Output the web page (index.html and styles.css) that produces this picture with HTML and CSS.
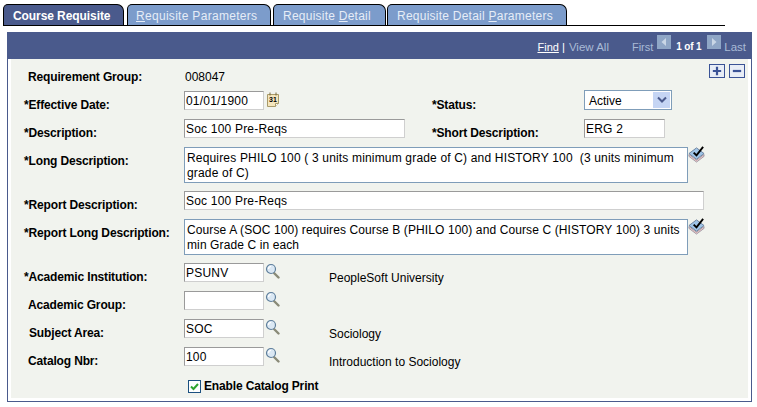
FILE: index.html
```html
<!DOCTYPE html>
<html lang="en">
<head>
<meta charset="utf-8">
<title>Course Requisite</title>
<link rel="stylesheet" href="styles.css">
</head>
<body>
<svg class="defs" width="0" height="0" aria-hidden="true">
  <defs>
    <symbol id="lens" viewBox="0 0 15 16">
      <path d="M9 10l4.500 4.500" stroke="#8a8a78" stroke-width="2.400" stroke-linecap="round" fill="none"/>
      <circle cx="6" cy="6" r="4.500" fill="#dbe8f4" stroke="#5f7f9c" stroke-width="1.200"/>
      <path d="M3.500 6a2.500 2.500 0 0 1 2.500-2.500" stroke="#fff" stroke-width="1.200" fill="none"/>
    </symbol>
    <symbol id="book" viewBox="0 0 18 18">
      <path d="M1 8l8-6 8 6-8 6z" fill="#9fc4e8" stroke="#6a7f9c" stroke-width="1"/>
      <path d="M1 9v2l8 6 8-6V9l-8 6z" fill="#f3c6c6" stroke="#8a8a9a" stroke-width=".8"/>
      <path d="M6 7l3 3 7-9" stroke="#000" stroke-width="2" fill="none"/>
    </symbol>
  </defs>
</svg>
<nav class="tabs">
  <a class="tab tab-active">Course Requisite</a>
  <a class="tab tab-2"><u>R</u>equisite Parameters</a>
  <a class="tab tab-3">Requisite <u>D</u>etail</a>
  <a class="tab tab-4">Requisite Detail <u>P</u>arameters</a>
</nav>
<main class="panel">
  <header class="bar">
    <a class="find">Find</a><span class="sep">|</span><span class="dim">View All</span>
    <span class="dim first">First</span>
    <svg class="nav-btn nav-prev" viewBox="0 0 14 14"><rect width="14" height="14" fill="#8fa6c6"/><path d="M9 3v8L4.500 7z" fill="#c9d6e6"/></svg>
    <b class="count">1 of 1</b>
    <svg class="nav-btn nav-next" viewBox="0 0 14 14"><rect width="14" height="14" fill="#8fa6c6"/><path d="M5 3v8l4.500-4z" fill="#c9d6e6"/></svg>
    <span class="dim last">Last</span>
  </header>
  <form class="form">
    <div class="add-remove">
      <span class="sq"><svg viewBox="0 0 15 13"><path d="M7.500 2v9M3 6.500h9" stroke="#3a5296" stroke-width="2.400"/></svg></span>
      <span class="sq"><svg viewBox="0 0 15 13"><path d="M3 6.500h9" stroke="#3a5296" stroke-width="2.400"/></svg></span>
    </div>
    <div class="row row-req">
      <label class="lbl ind">Requirement Group:</label>
      <span class="val">008047</span>
    </div>
    <div class="row">
      <label class="lbl">*Effective Date:</label>
      <input class="inp w80" value="01/01/1900">
      <svg class="cal" viewBox="0 0 12 15"><path d="M.5 2.500h11v9l-3 3h-8z" fill="#f5e6bd" stroke="#a89a6a"/><path d="M3 .5v3M9 .5v3" stroke="#7a6a3a"/><path d="M8.500 14.500v-3h3" fill="#fff" stroke="#a89a6a"/><text x="6" y="10" class="cal-text">31</text></svg>
      <label class="lbl lbl-right status">*Status:</label>
      <div class="select"><span>Active</span><span class="arrow"><svg viewBox="0 0 10 8"><path d="M1 1.500l4 4 4-4" fill="none" stroke="#4a5a8c" stroke-width="2"/></svg></span></div>
    </div>
    <div class="row">
      <label class="lbl">*Description:</label>
      <input class="inp w221" value="Soc 100 Pre-Reqs">
      <label class="lbl lbl-right short">*Short Description:</label>
      <input class="inp w81" value="ERG 2">
    </div>
    <div class="row row-tall">
      <label class="lbl">*Long Description:</label>
      <textarea class="area area-long" rows="2">Requires PHILO 100 ( 3 units minimum grade of C) and HISTORY 100  (3 units minimum grade of C)</textarea>
      <svg class="bookicon"><use href="#book"/></svg>
    </div>
    <div class="row">
      <label class="lbl">*Report Description:</label>
      <input class="inp w520" value="Soc 100 Pre-Reqs">
    </div>
    <div class="row row-tall">
      <label class="lbl">*Report Long Description:</label>
      <textarea class="area area-report" rows="2">Course A (SOC 100) requires Course B (PHILO 100) and Course C (HISTORY 100) 3 units min Grade C in each</textarea>
      <svg class="bookicon"><use href="#book"/></svg>
    </div>
    <div class="row">
      <label class="lbl">*Academic Institution:</label>
      <input class="inp w80" value="PSUNV">
      <svg class="lens"><use href="#lens"/></svg>
      <span class="desc">PeopleSoft University</span>
    </div>
    <div class="row">
      <label class="lbl ind">Academic Group:</label>
      <input class="inp w80" value="">
      <svg class="lens"><use href="#lens"/></svg>
    </div>
    <div class="row">
      <label class="lbl ind2">Subject Area:</label>
      <input class="inp w80" value="SOC">
      <svg class="lens"><use href="#lens"/></svg>
      <span class="desc">Sociology</span>
    </div>
    <div class="row">
      <label class="lbl ind">Catalog Nbr:</label>
      <input class="inp w80" value="100">
      <svg class="lens"><use href="#lens"/></svg>
      <span class="desc">Introduction to Sociology</span>
    </div>
    <div class="row row-check">
      <span class="check"><svg viewBox="0 0 11 11"><path d="M2 5.500l2.500 2.500L9 3" fill="none" stroke="#2fa52f" stroke-width="2"/></svg></span>
      <label class="check-lbl">Enable Catalog Print</label>
    </div>
  </form>
</main>
</body>
</html>
```
FILE: styles.css
```css
* { box-sizing: border-box; }
html, body { margin: 0; padding: 0; background: #fff; }
body { width: 757px; height: 407px; overflow: hidden; font: 12px/14px "Liberation Sans", Arial, sans-serif; color: #000; }
.defs { display: block; height: 0; }

.tabs { display: flex; align-items: flex-end; width: 722px; height: 26px; margin-left: 3px; padding-top: 4px; border-bottom: 1px solid #000; }
.tab { display: block; height: 21px; padding: 4px 0 0 9px; color: #e6edf7; background: #7c9ccb; border: 1px solid #000; border-bottom: 0; border-radius: 5px 7px 0 0; letter-spacing: .24px; }
.tab-active { width: 121px; margin-right: 3px; padding-left: 9px; font-weight: bold; color: #fff; background: #4a5a8c; letter-spacing: -.08px; }
.tab-2 { width: 144px; margin-right: 2px; padding-left: 8px; letter-spacing: .3px; }
.tab-3 { width: 113px; margin-right: 1px; padding-left: 9px; }
.tab-4 { width: 180px; padding-left: 9px; }

.panel { width: 745px; height: 370px; margin: 6px 0 0 7px; padding: 0 3px 3px; border: 1px solid #4a5a8c; border-top: 0; }
.bar { display: flex; align-items: flex-end; height: 27px; margin: 0 -3px; padding: 0 5px 5px 0; background: #4a5a8c; justify-content: flex-end; color: #a9bbd6; font-size: 11.500px; }
.find { color: #fff; font-size: 11px; text-decoration: underline; }
.sep { margin: 0 4px 0 3px; color: #fff; }
.first { margin-left: 23px; font-size: 11px; }
.nav-btn { width: 14px; height: 14px; margin-bottom: 5px; }
.nav-prev { margin-left: 4px; margin-right: 5px; }
.nav-next { margin-left: 6px; margin-right: 3px; }
.count { color: #fff; font-size: 10px; letter-spacing: -.2px; }
.last { font-size: 11.500px; }

.form { position: relative; display: flex; flex-direction: column; gap: 8px; height: 339px; padding: 9px 0 0 13px; background: #f1f3ee; }
.add-remove { position: absolute; top: 5px; right: 3px; display: flex; gap: 4px; }
.sq { display: block; width: 16px; height: 14px; background: #e8edf6; border: 1px solid #3a5296; }
.sq svg { display: block; width: 14px; height: 12px; }

.row { display: flex; align-items: flex-start; height: 20px; }
.row-req { height: 15px; }
.row-tall { height: 36px; }
.lbl { flex: none; width: 160px; padding-top: 7px; font-weight: bold; white-space: nowrap; letter-spacing: -.15px; }
.ind { padding-left: 4px; }
.ind2 { padding-left: 5px; }
.row-req .lbl { padding-top: 2px; }
.val { padding: 2px 0 0 1px; }
.lbl-right { width: auto; }
.status { margin-left: 153px; width: 152px; flex: none; padding-top: 7px; }
.short { margin-left: 27px; width: 152px; }

.inp { display: block; height: 19px; margin: 0; padding: 0 0 0 1px; font: inherit; letter-spacing: .2px; color: #000; background: #fff; border: 1px solid; border-color: #9a9a9a #cfcfcf #cfcfcf #9a9a9a; outline: 0; }
.w80 { width: 80px; }
.w81 { width: 81px; }
.w221 { width: 221px; }
.w520 { width: 520px; }
.cal { width: 12px; height: 15px; margin: 1px 0 0 3px; }
.cal-text { font: bold 7px "Liberation Sans", Arial, sans-serif; text-anchor: middle; fill: #000; }
.select { display: flex; align-items: center; justify-content: space-between; width: 88px; height: 20px; margin-top: -1px; padding: 1px 1px 0 4px; background: #fff; border: 1px solid #7f9db9; }
.arrow { display: flex; align-items: center; justify-content: center; width: 17px; height: 16px; margin-top: -1px; background: #c5d5f4; }
.arrow svg { width: 10px; height: 8px; }
.area { display: block; width: 504px; height: 36px; margin: 0; padding: 3px 2px 0 2px; font: inherit; line-height: 15px; color: #000; background: #fff; border: 1px solid #7f9db9; border-radius: 0; resize: none; overflow: hidden; outline: 0; }
.area-long { letter-spacing: .17px; }
.area-report { letter-spacing: .11px; }
.bookicon { width: 17px; height: 17px; margin-top: -1px; }
.lens { width: 15px; height: 16px; margin-left: 1px; }
.desc { margin-left: 49px; padding-top: 8px; }
.row-check { padding: 4px 0 0 164px; align-items: center; height: 18px; }
.check { display: block; width: 13px; height: 13px; margin-right: 3px; background: #fff; border: 1px solid #1c5180; }
.check svg { display: block; width: 11px; height: 11px; }
.check-lbl { font-weight: bold; letter-spacing: -.15px; }
```
